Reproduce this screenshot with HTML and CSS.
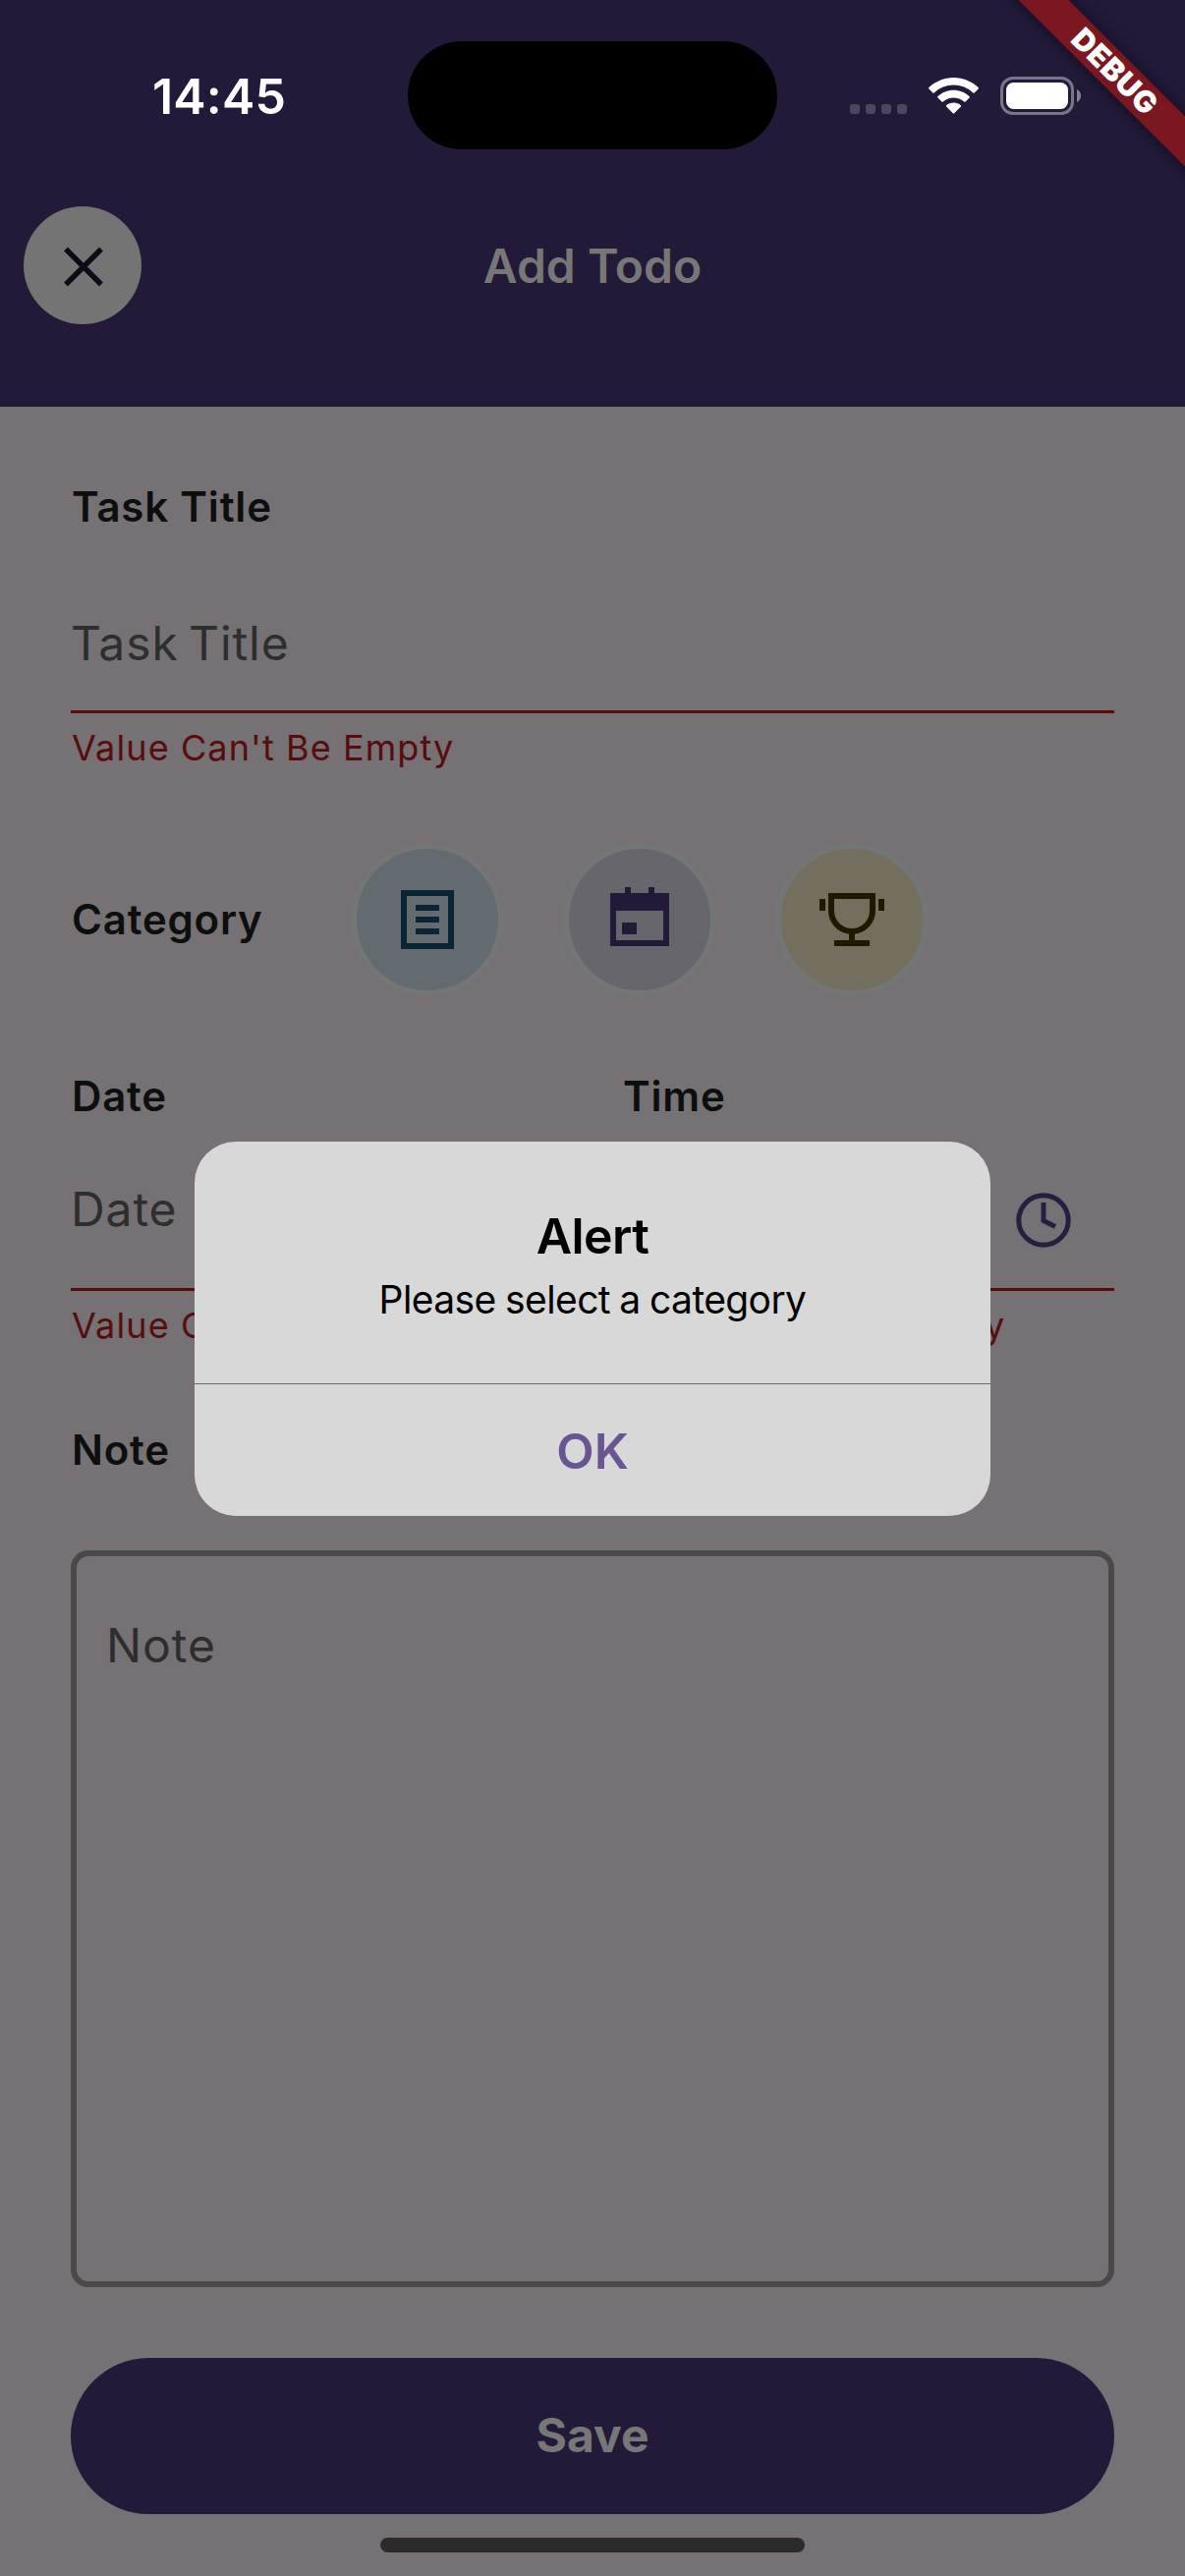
FILE: index.html
```html
<!DOCTYPE html>
<html lang="en">
<head>
<meta charset="utf-8">
<title>Add Todo</title>
<link rel="stylesheet" href="styles.css">
</head>
<body>
<div class="screen">
  <header class="header">
    <div class="status">
      <div class="time">14:45</div>
      <div class="island"></div>
      <div class="indicators">
        <svg class="signal" width="58" height="10" viewBox="0 0 58 10" fill="#4f4760"><rect width="10" height="10" rx="3"/><rect x="16" width="10" height="10" rx="3"/><rect x="32" width="10" height="10" rx="3"/><rect x="48" width="10" height="10" rx="3"/></svg>
        <svg class="wifi" width="51" height="37" viewBox="0 0 51 37" fill="#fff"><path d="M25.500 0C35.200 0 44 3.800 50.600 10.100Q51.200 10.800 50.600 11.400L46.600 15.400Q46 16 45.300 15.400A29 29 0 0 0 5.700 15.400Q5 16 4.400 15.400L.4 11.400Q-.2 10.800 .4 10.100C7 3.800 15.800 0 25.500 0Z"/><path d="M25.500 12.800C31.700 12.800 37.300 15.200 41.600 19.100Q42.200 19.800 41.600 20.400L37.500 24.500Q36.800 25 36.200 24.500A16.200 16.200 0 0 0 14.800 24.500Q14.200 25 13.500 24.500L9.400 20.400Q8.800 19.800 9.400 19.100C13.700 15.200 19.300 12.800 25.500 12.800Z"/><path d="M25.500 25.500C28.300 25.500 30.900 26.500 32.900 28.200Q33.500 28.800 32.900 29.400L26.200 36.300Q25.500 37 24.800 36.300L18.100 29.400Q17.500 28.800 18.100 28.200C20.100 26.500 22.700 25.500 25.500 25.500Z"/></svg>
        <svg class="battery" width="82" height="39" viewBox="0 0 82 39"><rect x="1.500" y="1.500" width="72" height="36" rx="11.500" fill="none" stroke="#7c758a" stroke-width="3"/><rect x="6" y="6" width="63" height="27" rx="7.500" fill="#fff"/><path d="M78 13C80.500 14 82 16.500 82 19.500S80.500 25 78 26Z" fill="#877f93"/></svg>
      </div>
    </div>
    <div class="nav">
      <div class="close"><svg width="72" height="72" viewBox="0 0 72 72" stroke="#0b0c16" stroke-width="5.500"><path d="M19 19.500L55 55.500M55 19.500L19 55.500"/></svg></div>
      <h1 class="title">Add Todo</h1>
    </div>
    <div class="ribbon">DEBUG</div>
  </header>

  <main class="form">
    <div class="label task-label">Task Title</div>
    <div class="field task-field"><span class="hint">Task Title</span></div>
    <div class="error">Value Can't Be Empty</div>

    <div class="categories">
      <div class="label category-label">Category</div>
      <div class="chip chip-task"><svg width="72" height="72" viewBox="0 0 72 72" fill="#0b2632"><path fill-rule="evenodd" d="M9 6H63V66H9ZM15 12V60H57V12Z"/><path d="M24 21H48V27H24ZM24 33H48V39H24ZM24 45H48V51H24Z"/></svg></div>
      <div class="chip chip-event"><svg width="72" height="72" viewBox="0 0 72 72" fill="#231939"><path fill-rule="evenodd" d="M6 9H21V3H27V9H45V3H51V9H66V63H6ZM12 27V57H60V27ZM18 39H33V51H18Z"/></svg></div>
      <div class="chip chip-goal"><svg width="72" height="72" viewBox="0 0 72 72" fill="#1f1902"><path fill-rule="evenodd" d="M12 9H60V27A24 24 0 0 1 39 50.800V57H54V63H18V57H33V50.800A24 24 0 0 1 12 27ZM18 15V27A18 18 0 0 0 54 27V15Z"/><path d="M3 15H9V27H3ZM63 15H69V27H63Z"/></svg></div>
    </div>

    <div class="when">
      <div class="column">
        <div class="label">Date</div>
        <div class="field when-field"><span class="hint">Date</span></div>
        <div class="error">Value Can't Be Empty</div>
      </div>
      <div class="column">
        <div class="label">Time</div>
        <div class="field when-field time-field">
          <svg class="clock" width="72" height="72" viewBox="0 0 72 72" fill="none" stroke="#281e40" stroke-width="5"><circle cx="36" cy="36" r="25.200"/><path d="M36 18V36.500L48 42.500"/></svg>
        </div>
        <div class="error">Value Can't Be Empty</div>
      </div>
    </div>

    <div class="label note-label">Note</div>
    <div class="note"><span class="hint">Note</span></div>
    <div class="save">Save</div>
    <div class="home-bar"></div>
  </main>

  <div class="overlay">
    <div class="dialog">
      <div class="dialog-body">
        <h2 class="dialog-title">Alert</h2>
        <p class="dialog-text">Please select a category</p>
      </div>
      <div class="dialog-action">OK</div>
    </div>
  </div>
</div>
</body>
</html>
```
FILE: styles.css
```css
* { box-sizing: border-box; }

body {
  margin: 0;
  font-family: Inter, "Liberation Sans", sans-serif;
  background: #767175;
}

.screen {
  position: relative;
  width: 1206px;
  height: 2622px;
  overflow: hidden;
}

svg { display: block; flex: none; }

/* Header */
.header {
  position: relative;
  height: 414px;
  overflow: hidden;
  background: #231939;
}

.status {
  display: grid;
  grid-template-columns: 415px 376px 415px;
  height: 195px;
}

.time {
  padding-left: 31px;
  text-align: center;
  font-size: 50px;
  font-weight: 600;
  line-height: 196px;
  letter-spacing: .2px;
  color: #fff;
}

.island {
  height: 110px;
  margin-top: 42px;
  border-radius: 55px;
  background: #000;
}

.indicators {
  display: flex;
  align-items: flex-start;
  padding: 78px 0 0 74px;
}
.signal { margin-top: 28px; }
.wifi { margin: 1px 0 0 22px; }
.battery { margin-left: 22px; }

.nav {
  display: grid;
  grid-template-columns: 120px 1fr 120px;
  align-items: center;
  height: 150px;
  padding: 0 24px;
}

.close {
  display: flex;
  align-items: center;
  justify-content: center;
  width: 120px;
  height: 120px;
  border-radius: 50%;
  background: #747474;
}

.title {
  margin: 0;
  padding-top: 2px;
  text-align: center;
  font-size: 48px;
  font-weight: 600;
  line-height: 60px;
  color: #777;
}

.ribbon {
  position: absolute;
  left: 954px;
  top: 53.500px;
  width: 360px;
  height: 36px;
  padding-left: 2px;
  transform: rotate(45deg);
  background: #7b1720;
  box-shadow: 0 0 18px rgba(0, 0, 0, .5);
  text-align: center;
  font-size: 30.6px;
  font-weight: 900;
  line-height: 35px;
  letter-spacing: .6px;
  color: #fff;
}

/* Form */
.form { padding: 72px 72px 0; }

.label {
  padding-left: 1px;
  font-size: 42px;
  font-weight: 600;
  line-height: 60px;
  letter-spacing: .8px;
  color: #0d0e0e;
}

.field {
  display: flex;
  border-bottom: 3px solid #570c0d;
}
.task-field { height: 180px; padding-top: 79px; }
.when-field { height: 168px; padding-top: 55px; }
.time-field { justify-content: flex-end; }

.hint {
  font-size: 48px;
  line-height: 60px;
  letter-spacing: .9px;
  word-spacing: -4px;
  color: #2d2e2e;
}

.error {
  margin-top: 13px;
  padding-left: 1px;
  font-size: 36px;
  line-height: 45px;
  letter-spacing: 1.100px;
  white-space: nowrap;
  color: #570c0d;
}

.categories {
  display: flex;
  align-items: center;
  gap: 60px;
  margin-top: 74px;
}
.category-label { width: 225.300px; }

.chip {
  display: flex;
  align-items: center;
  justify-content: center;
  width: 156px;
  height: 156px;
  border: 6px solid #737674;
  border-radius: 50%;
}
.chip-task { background: #636a70; }
.chip-event { background: #67666c; }
.chip-goal { background: #746e5f; }

.when {
  display: grid;
  grid-template-columns: 1fr 1fr;
  gap: 60px;
  margin-top: 72px;
}
.clock { margin: 5px 36px 0 0; }

.note-label { margin-top: 74px; }

.note {
  height: 750px;
  margin-top: 72px;
  padding: 61px 30px;
  border: 6px solid #494949;
  border-radius: 18px;
}

.save {
  height: 159px;
  margin-top: 72px;
  border-radius: 80px;
  background: #231939;
  text-align: center;
  font-size: 48px;
  font-weight: 700;
  line-height: 158px;
  color: #777;
}

.home-bar {
  width: 432px;
  height: 15px;
  margin: 24px auto 0;
  border-radius: 8px;
  background: #2b2b2b;
}

/* Alert */
.overlay {
  position: absolute;
  inset: 0;
  padding: 1162px 198px 0;
}

.dialog {
  height: 381px;
  overflow: hidden;
  border-radius: 42px;
  background: #d8d8d8;
  text-align: center;
}

.dialog-body {
  height: 247px;
  padding-top: 66px;
  border-bottom: 1px solid #6c6c6e;
}

.dialog-title {
  margin: 0;
  font-size: 50px;
  font-weight: 600;
  line-height: 60px;
  letter-spacing: -.6px;
  color: #000;
}

.dialog-text {
  margin: 10px 0 0;
  font-size: 39px;
  line-height: 50px;
  letter-spacing: -.6px;
  word-spacing: -1px;
  color: #000;
}

.dialog-action {
  font-size: 50px;
  font-weight: 600;
  line-height: 136px;
  color: #685591;
}
```
